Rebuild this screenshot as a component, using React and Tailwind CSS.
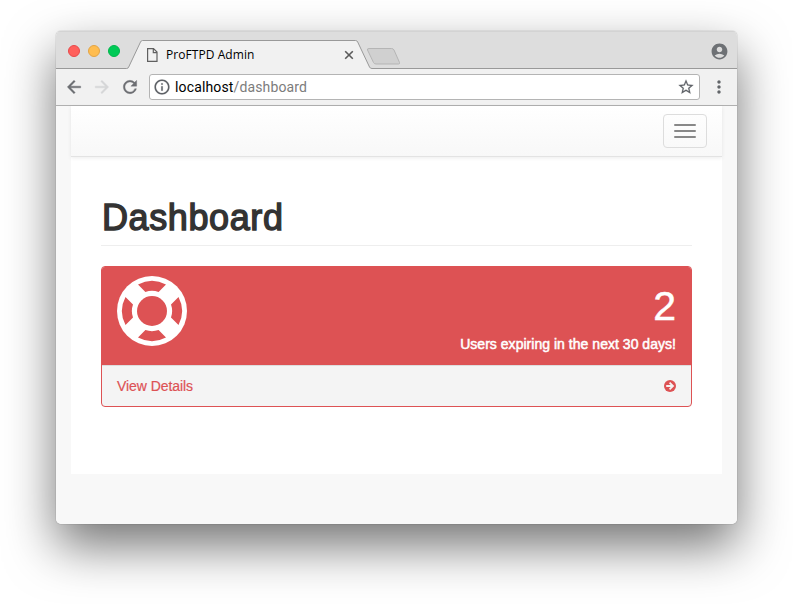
import { MdArrowBack, MdArrowForward, MdRefresh, MdInfoOutline, MdStarBorder, MdMoreVert, MdAccountCircle } from 'react-icons/md';

function TabStrip() {
  return (
    <div className="relative flex h-[38px] items-center bg-[#dddddd] pl-3 pt-px">
      <svg className="absolute inset-0" width="681" height="38" viewBox="0 0 681 38" fill="none">
        <path d="M72 38 L84.5 11 Q85.2 9.5 86.5 9.5 H299.5 Q301 9.5 301.7 11 L313.5 36 Q314.2 37.5 316 37.5 V38Z" fill="#f1f1f1" />
        <path d="M0 37.5 H70.5 Q72 37.5 72.7 36 L84.5 11 Q85.2 9.5 86.5 9.5 H299.5 Q301 9.5 301.7 11 L313.5 36 Q314.2 37.5 316 37.5 H681" stroke="#999999" />
        <path d="M313 17.5 H335.5 Q337.3 17.5 338 19 L343.5 31.5 Q344 33 342.5 33 H320 Q318.2 33 317.5 31.5 L311.5 19 Q311 17.5 313 17.5Z" fill="#d0d0d0" stroke="#b5b5b5" />
        <path d="M0 .5H681" stroke="#d3d3d3" />
      </svg>
      <div className="relative flex gap-2">
        <span className="size-3 rounded-full border border-[#e8494a] bg-[#ff605c]" />
        <span className="size-3 rounded-full border border-[#e3a445] bg-[#ffbd50]" />
        <span className="size-3 rounded-full border border-[#00b64c] bg-[#00ca56]" />
      </div>
      <div className="relative ml-[26px] mt-[9px] flex w-[208px] items-center">
        <svg className="ml-px" width="11" height="14" viewBox="0 0 11 14" fill="none" stroke="#606060" strokeWidth="1.2">
          <path d="M.6 .6H6.5L10 4.1V13.4H.6Z M6.3 1V4.6H9.8" />
        </svg>
        <span className="ml-[8px] whitespace-nowrap font-['Open_Sans',sans-serif] text-[12px] leading-[14px] tracking-[0.06px] text-black">ProFTPD Admin</span>
        <svg className="ml-auto" width="10" height="10" viewBox="0 0 10 10" stroke="#5a5a5a" strokeWidth="1.6">
          <path d="M1.2 1.2L8.8 8.8M8.8 1.2L1.2 8.8" />
        </svg>
      </div>
      <MdAccountCircle className="relative ml-auto mr-[8px] mt-px text-[#6e7175]" size={19} />
    </div>
  );
}

function Toolbar() {
  return (
    <div className="flex h-[37px] items-center border-b border-[#b0b0b0] bg-[#f1f1f1] pl-[8px] pr-[8px]">
      <MdArrowBack size={20} strokeWidth="0.5" className="text-[#6c6e72] [&>path[fill=none]]:stroke-none" />
      <MdArrowForward size={20} strokeWidth="0.5" className="ml-[8px] text-[#d5d6d7] [&>path[fill=none]]:stroke-none" />
      <MdRefresh size={20} strokeWidth="0.4" className="ml-[8px] text-[#6c6e72] [&>path[fill=none]]:stroke-none" />
      <div className="ml-[9px] flex h-[26px] w-[551px] items-center rounded-[3px] border border-[#b4b4b4] bg-white pl-[3px] pr-[4px]">
        <MdInfoOutline size={18} strokeWidth="0.2" className="text-[#5f6368] [&>path[fill=none]]:stroke-none" />
        <div className="ml-[4px] whitespace-nowrap font-['Roboto',sans-serif] text-[14px] leading-4 tracking-[0.14px] text-black">
          localhost<span className="text-[#7c7c7c]">/dashboard</span>
        </div>
        <MdStarBorder size={18} strokeWidth="0.2" className="ml-auto text-[#5f6368] [&>path[fill=none]]:stroke-none" />
      </div>
      <MdMoreVert size={20} className="ml-auto text-[#626569]" />
    </div>
  );
}

function LifeRing() {
  const segment = 'M-14-26.5A30 30 0 0 1 14-26.5L6.6-19A20 20 0 0 0-6.6-19Z';
  return (
    <svg width="70" height="70" viewBox="-35 -35 70 70">
      <circle r="35" fill="#fff" />
      <circle r="15" fill="#dd5254" />
      <g fill="#dd5254">
        <path d={segment} />
        <path d={segment} transform="rotate(90)" />
        <path d={segment} transform="rotate(180)" />
        <path d={segment} transform="rotate(270)" />
      </g>
    </svg>
  );
}

function Panel() {
  return (
    <section className="mt-5 h-[141px] overflow-hidden rounded border border-[#dd5254] bg-[#f4f4f4]">
      <div className="flex h-[98px] justify-between bg-[#dd5254] px-[15px] pt-[9px] text-white">
        <LifeRing />
        <div className="text-right">
          <div className="mt-[8px] text-[41px] leading-[44px] [-webkit-text-stroke:0.5px_white]">2</div>
          <div className="mt-[6px] whitespace-nowrap text-[14px] leading-5 tracking-[0.03px] [-webkit-text-stroke:0.5px_white]">Users expiring in the next 30 days!</div>
        </div>
      </div>
      <div className="flex h-[41px] items-center justify-between border-t border-[#dddddd] px-[15px] text-[14px] leading-5 text-[#dd5254]">
        <span className="tracking-[-0.06px] [-webkit-text-stroke:0.2px_#dd5254]">View Details</span>
        <svg width="12" height="12" viewBox="0 0 12 12">
          <circle cx="6" cy="6" r="6" fill="#dd5254" />
          <path d="M2.2 6H9M5.6 2.6L9 6L5.6 9.4" fill="none" stroke="#f4f4f4" strokeWidth="1.8" />
        </svg>
      </div>
    </section>
  );
}

export default function App() {
  return (
    <div className="h-[604px] w-[793px] overflow-hidden bg-white pl-14 pt-[31px] font-['Liberation_Sans',Arial,sans-serif]">
      <div className="h-[493px] w-[681px] rounded-[5px] shadow-[0_0_1px_rgba(0,0,0,0.6),0_22px_50px_rgba(0,0,0,0.55)]">
        <div className="h-full overflow-hidden rounded-[5px] bg-[#f8f8f8]">
          <TabStrip />
          <Toolbar />
          <main className="mx-[15px] h-[368px] bg-white">
            <nav className="flex h-[51px] items-center justify-end border-b border-[#e3e3e3] bg-linear-to-b from-white to-[#f8f8f8] pr-[15px] shadow-[0_1px_4px_rgba(0,0,0,0.08)]">
              <button className="flex h-[34px] w-11 flex-col items-center justify-center gap-1 rounded border border-[#dddddd]">
                <span className="h-0.5 w-[22px] rounded-[1px] bg-[#888888]" />
                <span className="h-0.5 w-[22px] rounded-[1px] bg-[#888888]" />
                <span className="h-0.5 w-[22px] rounded-[1px] bg-[#888888]" />
              </button>
            </nav>
            <div className="px-[30px] pt-10">
              <h1 className="h-[49px] whitespace-nowrap border-b border-[#eeeeee] pl-px pt-px text-[36px] leading-[40px] tracking-[0.6px] text-[#333333] [-webkit-text-stroke:1.4px_#333333]">Dashboard</h1>
              <Panel />
            </div>
          </main>
        </div>
      </div>
    </div>
  );
}
